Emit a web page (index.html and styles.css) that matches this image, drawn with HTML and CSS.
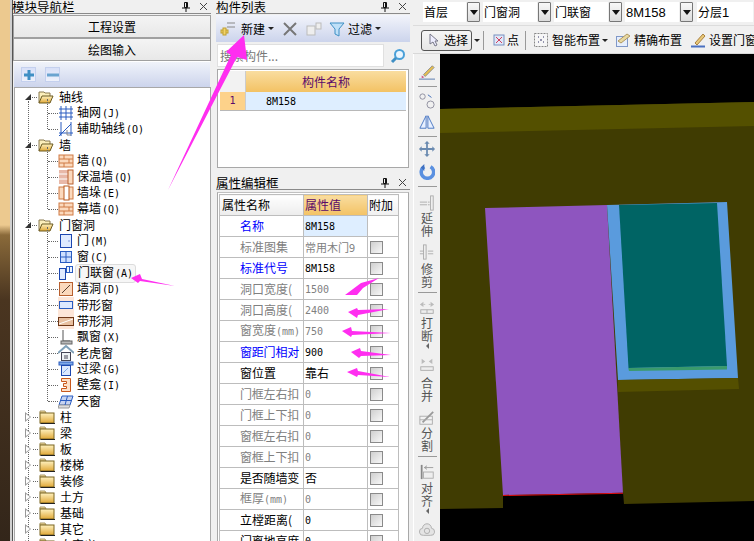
FILE: index.html
```html
<!DOCTYPE html>
<html lang="zh-CN">
<head>
<meta charset="utf-8">
<title>门窗洞</title>
<link rel="stylesheet" href="styles.css">
</head>
<body>
<svg class="defs" width="0" height="0">
  <defs>
    <linearGradient id="fold" x1="0" y1="0" x2="0" y2="1"><stop offset="0" stop-color="#fff2c0"/><stop offset="1" stop-color="#e0a838"/></linearGradient>
    <symbol id="f-open" viewBox="0 0 16 14"><path d="M1 13V2h5l1 1h5v3" fill="#fbeebb" stroke="#8a7a50"/><path d="M1 13l3-7h11l-3 7z" fill="url(#fold)" stroke="#6b5a20"/></symbol>
    <symbol id="f-shut" viewBox="0 0 16 14"><path d="M1 3V1h5l1 2z" fill="#f4dc98" stroke="#a89868"/><rect x="1" y="3" width="14" height="10" fill="url(#fold)" stroke="#7a6420"/><path d="M1.500 13.500h14.500" stroke="#222"/></symbol>
    <symbol id="brick" viewBox="0 0 16 16"><rect x="1" y="2" width="14" height="12" fill="#fbd9bd" stroke="#cf7a45"/><path d="M1 6h14M1 10h14M6 2v4M11 6v4M6 10v4" stroke="#cf7a45" fill="none"/></symbol>
    <symbol id="pin" viewBox="0 0 8 10"><path d="M2.500 0.500h3v5h-3zM0 6h8M4 6v4M4.500 1v4" stroke="#111" fill="none"/></symbol>
    <symbol id="x" viewBox="0 0 9 9"><path d="M1 1l7 7M8 1L1 8" stroke="#444" fill="none"/></symbol>
  </defs>
</svg>

<div class="app">
  <div class="wall"></div>

  <section class="nav">
    <header class="title"><span>模块导航栏</span><svg class="pin"><use href="#pin"/></svg><svg class="close"><use href="#x"/></svg></header>
    <div class="navbtn">工程设置</div>
    <div class="navbtn second">绘图输入</div>
    <div class="treebar">
      <span class="tb"><svg viewBox="0 0 12 12" width="12" height="12"><path d="M1 6h10M6 1v10" stroke="#3f8fc4" stroke-width="3"/></svg></span>
      <span class="tb"><svg viewBox="0 0 12 12" width="12" height="12"><path d="M0 6h12" stroke="#6aa4d0" stroke-width="3"/></svg></span>
    </div>
    <div class="tree">
      <div class="group">
        <div class="row top"><i class="tri open"></i><i class="dots"></i><svg class="folder"><use href="#f-open"/></svg><span>轴线</span></div>
        <div class="kids short">
          <div class="row leaf"><i class="elbow"></i><svg class="ic" viewBox="0 0 16 16"><path d="M3 1v14M8 1v14M13 1v14M1 4h14M1 8h14M1 12h14" stroke="#2a5cc0" fill="none"/></svg><span>轴网<b>(J)</b></span></div>
          <div class="row leaf"><i class="elbow"></i><svg class="ic" viewBox="0 0 16 16"><path d="M3 1v14M13 1v14M1 12h14M1 15L13 3" stroke="#2a5cc0" fill="none"/><path d="M9 9v5h4" stroke="#8a8a8a" fill="none"/></svg><span>辅助轴线<b>(O)</b></span></div>
        </div>
      </div>
      <div class="group">
        <div class="row top"><i class="tri open"></i><i class="dots"></i><svg class="folder"><use href="#f-open"/></svg><span>墙</span></div>
        <div class="kids">
          <div class="row leaf"><i class="elbow"></i><svg class="ic"><use href="#brick"/></svg><span>墙<b>(Q)</b></span></div>
          <div class="row leaf"><i class="elbow"></i><svg class="ic" viewBox="0 0 16 16"><rect x="1" y="1" width="9" height="14" fill="#e8b8a8"/><path d="M1 5h9M1 10h9" stroke="#fff"/><rect x="10" y="1" width="5" height="14" fill="#fbd9bd" stroke="#b86030"/></svg><span>保温墙<b>(Q)</b></span></div>
          <div class="row leaf"><i class="elbow"></i><svg class="ic" viewBox="0 0 16 16"><rect x="1" y="2" width="14" height="12" fill="#fbd9bd" stroke="#cf7a45"/><rect x="6" y="1" width="5" height="14" fill="#fff" stroke="#b85a20"/></svg><span>墙垛<b>(E)</b></span></div>
          <div class="row leaf"><i class="elbow"></i><svg class="ic"><use href="#brick"/></svg><span>幕墙<b>(Q)</b></span></div>
        </div>
      </div>
      <div class="group">
        <div class="row top"><i class="tri open"></i><i class="dots"></i><svg class="folder"><use href="#f-open"/></svg><span>门窗洞</span></div>
        <div class="kids">
          <div class="row leaf"><i class="elbow"></i><svg class="ic" viewBox="0 0 16 16"><rect x="2.500" y="1.500" width="11" height="13" fill="#dfeaff" stroke="#1c47b0"/><path d="M10.500 8h1" stroke="#1c47b0"/></svg><span>门<b>(M)</b></span></div>
          <div class="row leaf"><i class="elbow"></i><svg class="ic" viewBox="0 0 16 16"><rect x="2.500" y="2.500" width="11" height="11" fill="#cfe0ff" stroke="#2a5cc0"/><path d="M8 2v12M2 8h12" stroke="#2a5cc0"/></svg><span>窗<b>(C)</b></span></div>
          <div class="row leaf hot"><i class="elbow"></i><svg class="ic" viewBox="0 0 16 16"><rect x="1.500" y="3.500" width="6" height="11" fill="#dfeaff" stroke="#1c47b0"/><rect x="8.500" y="1.500" width="6" height="6" fill="#eef4ff" stroke="#2a5cc0"/><path d="M11.500 1v6" stroke="#2a5cc0"/></svg><span class="pill">门联窗<b>(A)</b></span></div>
          <div class="row leaf"><i class="elbow"></i><svg class="ic" viewBox="0 0 16 16"><rect x="1.500" y="1.500" width="13" height="13" fill="#fbd9bd" stroke="#b86030"/><path d="M4 12L12 4" stroke="#5a4030"/></svg><span>墙洞<b>(D)</b></span></div>
          <div class="row leaf"><i class="elbow"></i><svg class="ic" viewBox="0 0 16 16"><rect x="0" y="0" width="16" height="16" fill="#fde6d8"/><rect x="1.500" y="4.500" width="13" height="7" fill="#dce8ff" stroke="#2a5cc0"/></svg><span>带形窗</span></div>
          <div class="row leaf"><i class="elbow"></i><svg class="ic" viewBox="0 0 16 16"><rect x="0" y="0" width="16" height="16" fill="#fde6d8"/><rect x="0.500" y="4.500" width="15" height="8" fill="#e8c0a0" stroke="#703818"/><path d="M1 11L15 6" stroke="#fff"/></svg><span>带形洞</span></div>
          <div class="row leaf"><i class="elbow"></i><svg class="ic" viewBox="0 0 16 16"><path d="M5 1v11h7" stroke="#555" fill="#fff"/><rect x="3" y="12" width="11" height="3" fill="#b8b8b8" stroke="#666"/></svg><span>飘窗<b>(X)</b></span></div>
          <div class="row leaf"><i class="elbow"></i><svg class="ic" viewBox="0 0 16 16"><path d="M0 8l8-7 8 7" stroke="#7fa0b8" stroke-width="2" fill="none"/><rect x="3.500" y="7.500" width="9" height="8" fill="#eef2f4" stroke="#445"/><path d="M6 11h4M6 13h4" stroke="#445"/></svg><span>老虎窗</span></div>
          <div class="row leaf"><i class="elbow"></i><svg class="ic" viewBox="0 0 16 16"><rect x="1" y="1" width="14" height="3" fill="#7fa8e8" stroke="#2a5cc0"/><rect x="3.500" y="4.500" width="9" height="10" fill="#dce8ff" stroke="#1c47b0"/><path d="M5 12l5-5" stroke="#7fa8e8"/></svg><span>过梁<b>(G)</b></span></div>
          <div class="row leaf"><i class="elbow"></i><svg class="ic" viewBox="0 0 16 16"><path d="M3.500 1.500h9v13h-9v-3h5v-2h-3v-3h3v-2h-5z" fill="#fde0c8" stroke="#c8581c"/></svg><span>壁龛<b>(I)</b></span></div>
          <div class="row leaf"><i class="elbow"></i><svg class="ic" viewBox="0 0 16 16"><path d="M4 3h11l-3 9H1z" fill="#c8d4f0" stroke="#2a5cc0"/><path d="M1 12h11l-1 3H0z" fill="#ddd" stroke="#999"/><path d="M9.500 3L7 12M3 7.500h10" stroke="#2a5cc0"/></svg><span>天窗</span></div>
        </div>
      </div>
      <div class="row top"><i class="tri"></i><i class="dots"></i><svg class="folder"><use href="#f-shut"/></svg><span>柱</span></div>
      <div class="row top"><i class="tri"></i><i class="dots"></i><svg class="folder"><use href="#f-shut"/></svg><span>梁</span></div>
      <div class="row top"><i class="tri"></i><i class="dots"></i><svg class="folder"><use href="#f-shut"/></svg><span>板</span></div>
      <div class="row top"><i class="tri"></i><i class="dots"></i><svg class="folder"><use href="#f-shut"/></svg><span>楼梯</span></div>
      <div class="row top"><i class="tri"></i><i class="dots"></i><svg class="folder"><use href="#f-shut"/></svg><span>装修</span></div>
      <div class="row top"><i class="tri"></i><i class="dots"></i><svg class="folder"><use href="#f-shut"/></svg><span>土方</span></div>
      <div class="row top"><i class="tri"></i><i class="dots"></i><svg class="folder"><use href="#f-shut"/></svg><span>基础</span></div>
      <div class="row top"><i class="tri"></i><i class="dots"></i><svg class="folder"><use href="#f-shut"/></svg><span>其它</span></div>
      <div class="row top"><i class="tri"></i><i class="dots"></i><svg class="folder"><use href="#f-shut"/></svg><span>自定义</span></div>
    </div>
  </section>

  <div class="mid">
    <section class="list">
      <header class="title"><span>构件列表</span><svg class="pin"><use href="#pin"/></svg><svg class="close"><use href="#x"/></svg></header>
      <div class="listbar">
        <svg class="ic" viewBox="0 0 16 16"><path d="M7 2h8M7 6h8" stroke="#888"/><rect x="1" y="9" width="7" height="3" fill="#f2d36a" stroke="#c0a030"/><rect x="3" y="7" width="3" height="7" fill="#f2d36a" stroke="#c0a030"/></svg>
        <span class="new">新建</span><i class="caret"></i>
        <svg class="ic del" viewBox="0 0 16 16"><path d="M2 2l12 12M14 2L2 14" stroke="#777" stroke-width="2"/></svg>
        <svg class="ic copy" viewBox="0 0 16 16"><rect x="1" y="5" width="8" height="9" fill="#eee" stroke="#bbb"/><rect x="10" y="2" width="5" height="6" fill="#eee" stroke="#bbb"/></svg>
        <svg class="ic filter" viewBox="0 0 16 16"><path d="M1 2h14L10 8v7L6 13V8z" fill="#bfe0f8" stroke="#3f8fc4"/></svg>
        <span class="fil">过滤</span><i class="caret"></i>
      </div>
      <div class="searchrow">
        <div class="search">搜索构件...</div>
        <svg class="ic" viewBox="0 0 16 16"><circle cx="9.500" cy="6.500" r="4.500" fill="#eaf6ff" stroke="#4aa0d8" stroke-width="2"/><path d="M6 10l-4 4" stroke="#3f8fc4" stroke-width="3"/></svg>
      </div>
      <div class="listgrid">
        <div class="lhead"><span class="corner"></span><span class="lname">构件名称</span></div>
        <div class="lrow"><span class="num">1</span><span class="lval"><b>8M158</b></span></div>
      </div>
    </section>

    <section class="props">
      <header class="title"><span>属性编辑框</span><svg class="pin"><use href="#pin"/></svg><svg class="close"><use href="#x"/></svg></header>
      <div class="propbox">
        <table class="ptable">
          <tr class="phead"><th class="c1">属性名称</th><th class="c2">属性值</th><th class="c3">附加</th></tr>
          <tr class="blue cur"><td class="c1">名称</td><td class="c2"><b>8M158</b></td><td class="c3"></td></tr>
          <tr class="gray"><td class="c1">标准图集</td><td class="c2 clip">常用木门9</td><td class="c3"><i class="chk"></i></td></tr>
          <tr class="blue"><td class="c1">标准代号</td><td class="c2"><b>8M158</b></td><td class="c3"><i class="chk"></i></td></tr>
          <tr class="gray"><td class="c1">洞口宽度(</td><td class="c2"><b>1500</b></td><td class="c3"><i class="chk"></i></td></tr>
          <tr class="gray"><td class="c1">洞口高度(</td><td class="c2"><b>2400</b></td><td class="c3"><i class="chk"></i></td></tr>
          <tr class="gray"><td class="c1">窗宽度<b>(mm)</b></td><td class="c2"><b>750</b></td><td class="c3"><i class="chk"></i></td></tr>
          <tr class="blue"><td class="c1 tight">窗距门相对</td><td class="c2"><b>900</b></td><td class="c3"><i class="chk"></i></td></tr>
          <tr class="black"><td class="c1">窗位置</td><td class="c2">靠右</td><td class="c3"><i class="chk"></i></td></tr>
          <tr class="gray"><td class="c1 tight">门框左右扣</td><td class="c2"><b>0</b></td><td class="c3"><i class="chk"></i></td></tr>
          <tr class="gray"><td class="c1 tight">门框上下扣</td><td class="c2"><b>0</b></td><td class="c3"><i class="chk"></i></td></tr>
          <tr class="gray"><td class="c1 tight">窗框左右扣</td><td class="c2"><b>0</b></td><td class="c3"><i class="chk"></i></td></tr>
          <tr class="gray"><td class="c1 tight">窗框上下扣</td><td class="c2"><b>0</b></td><td class="c3"><i class="chk"></i></td></tr>
          <tr class="black"><td class="c1 tight">是否随墙变</td><td class="c2">否</td><td class="c3"><i class="chk"></i></td></tr>
          <tr class="gray"><td class="c1">框厚<b>(mm)</b></td><td class="c2"><b>0</b></td><td class="c3"><i class="chk"></i></td></tr>
          <tr class="black"><td class="c1">立樘距离(</td><td class="c2"><b>0</b></td><td class="c3"><i class="chk"></i></td></tr>
          <tr class="black"><td class="c1 tight">门离地高度</td><td class="c2"><b>0</b></td><td class="c3"><i class="chk"></i></td></tr>
        </table>
      </div>
    </section>
  </div>

  <div class="main">
    <div class="combos">
      <div class="combo w42"><span>首层</span></div><i class="drop"></i>
      <div class="combo w54"><span>门窗洞</span></div><i class="drop"></i>
      <div class="combo w54"><span>门联窗</span></div><i class="drop"></i>
      <div class="combo w54"><span class="latin">8M158</span></div><i class="drop"></i>
      <div class="combo w55"><span>分层<span class="latin">1</span></span></div>
    </div>
    <div class="tools">
      <div class="select"><svg viewBox="0 0 12 14" width="12" height="14"><path d="M2 1v10l3-2 2 4 2-1-2-4h3z" fill="#eef" stroke="#778"/></svg><span>选择</span></div>
      <i class="caret"></i><i class="vsep"></i>
      <svg class="ic" viewBox="0 0 16 16"><rect x="3" y="3" width="10" height="10" fill="#dfe8f8" stroke="#7890c0"/><path d="M5 5l6 6M11 5l-6 6" stroke="#d04060"/></svg>
      <span class="tl pt">点</span><i class="vsep"></i>
      <svg class="ic" viewBox="0 0 16 16"><rect x="1.500" y="1.500" width="13" height="13" fill="#f6f6f6" stroke="#888" stroke-dasharray="2 1"/><path d="M5 5h1M10 5h1M5 10h1M10 10h1M8 7v2" stroke="#336"/></svg>
      <span class="tl">智能布置</span><i class="caret"></i>
      <svg class="ic sp1" viewBox="0 0 16 16"><rect x="1.500" y="4.500" width="11" height="10" fill="#e6eefc" stroke="#8098c8"/><path d="M3 9l9-7 3 2-9 7z" fill="#e8d8a0" stroke="#b09860"/></svg>
      <span class="tl">精确布置</span>
      <svg class="ic sp2" viewBox="0 0 16 16"><path d="M5 11l8-9 2 2-8 9z" fill="#e8c878" stroke="#a88040"/><path d="M1 14.500h14" stroke="#4a70c0" stroke-width="2"/></svg>
      <span class="tl">设置门窗</span>
    </div>
    <div class="work">
      <div class="vbar">
        <svg class="ic" viewBox="0 0 18 18"><path d="M5 12L15 2l2 2L7 14z" fill="#e8c050" stroke="#888"/><path d="M3 13l3 2-3 1z" fill="#d05080"/><path d="M0 17h18" stroke="#4a70a8"/></svg>
        <i class="hsep m6"></i>
        <svg class="ic m6" viewBox="0 0 18 18"><circle cx="4" cy="4" r="3" fill="none" stroke="#889"/><circle cx="13" cy="13" r="4" fill="none" stroke="#889"/><path d="M10 2l4 3" stroke="#3060b0"/></svg>
        <svg class="ic m5" viewBox="0 0 18 18"><path d="M8 2L1 16h7zM10 2l7 14h-7z" fill="#e8f0ff" stroke="#3f70c0"/></svg>
        <i class="hsep m6"></i>
        <svg class="ic m4" viewBox="0 0 18 18"><path d="M9 1v16M1 9h16" stroke="#6a8ab0" stroke-width="2"/><path d="M9 0l3 3H6zM9 18l3-3H6zM0 9l3-3v6zM18 9l-3-3v6z" fill="#6a8ab0"/></svg>
        <svg class="ic m7" viewBox="0 0 18 18"><path d="M6 3a7 7 0 1 0 7 0" fill="none" stroke="#5a90e0" stroke-width="4"/><path d="M6 0v8L2 4z" fill="#3f70c0"/></svg>
        <i class="hsep m6"></i>
        <svg class="ic m8" viewBox="0 0 18 18"><rect x="13" y="1" width="3" height="16" fill="#eee" stroke="#aaa"/><path d="M1 8h8M1 11h8M10 8h2M10 11h2" stroke="#aaa"/></svg>
        <span class="vt">延<br>伸</span>
        <svg class="ic m7" viewBox="0 0 18 18"><rect x="5" y="1" width="3" height="16" fill="#eee" stroke="#aaa"/><path d="M1 8h4M1 11h4M10 8h6M10 11h6" stroke="#aaa"/></svg>
        <span class="vt m2">修<br>剪</span>
        <i class="hsep m4"></i>
        <svg class="ic m7" viewBox="0 0 18 18"><path d="M1 5l4-3v6zM17 5l-4-3v6z" fill="#bbb"/><path d="M5 5h2M11 5h2" stroke="#bbb"/><rect x="2" y="11" width="14" height="4" fill="#eee" stroke="#aaa"/><path d="M9 11v4" stroke="#aaa"/></svg>
        <span class="vt">打<br>断</span><i class="mini m1"></i>
        <svg class="ic m8" viewBox="0 0 18 18"><path d="M7 5L3 2v6zM11 5l4-3v6z" fill="#bbb"/><rect x="2" y="11" width="14" height="4" fill="#eee" stroke="#aaa"/></svg>
        <span class="vt m3">合<br>并</span>
        <svg class="ic m8" viewBox="0 0 18 18"><rect x="1" y="7" width="14" height="9" fill="#f2f2f2" stroke="#aaa"/><path d="M4 14L16 2" stroke="#999" stroke-width="2"/><path d="M1 11h14" stroke="#aaa"/></svg>
        <span class="vt">分<br>割</span>
        <i class="hsep m4"></i>
        <svg class="ic m7" viewBox="0 0 18 18"><path d="M3 1v16" stroke="#888" stroke-width="2"/><rect x="5" y="9" width="11" height="7" fill="#eee" stroke="#aaa"/><path d="M6 4h10M6 4l3-2M6 4l3 2" stroke="#999"/></svg>
        <span class="vt m1">对<br>齐</span><i class="mini m1"></i>
        <svg class="ic m8" viewBox="0 0 18 18"><path d="M5 15a4 4 0 0 1-1-8 5 5 0 0 1 10 0 4 4 0 0 1-1 8z" fill="#e4e4e4" stroke="#aaa"/><circle cx="9" cy="10" r="3" fill="none" stroke="#aaa"/></svg>
      </div>
      <svg class="scene" viewBox="0 0 314 487" preserveAspectRatio="none">
        <rect width="314" height="487" fill="#000"/>
        <polygon points="0,55 314,48 314,447 184,450 183,438 63,441 63,454 0,455" fill="#403c02"/>
        <polygon points="0,55 314,48 314,72 0,79" fill="#545000"/>
        <polygon points="45,154 167,151 183,438.700 63,441" fill="#8e55bf"/>
        <polygon points="63,441 183,438.700 183,439.700 63,442" fill="#e01010"/>
        <polygon points="167,151 287,148 298,324 178,326" fill="#5a9bdd"/>
        <polygon points="179,151 277,149 287,312 188.500,314" fill="#006464"/>
        <polygon points="188.300,314 287,312 287,315.500 189,317" fill="#3a9a6c"/>
        <polygon points="178,326 298,324 299,335 178,338" fill="#544f00"/>
      </svg>
    </div>
  </div>
</div>

<svg class="arrows" viewBox="0 0 754 541">
  <g fill="#ff2ef0">
    <polygon points="168,190 231,55 226,52 244,35 247,60 237,57"/>
    <polygon points="131,278 140,274 142,279 175,286 140,281 138,283"/>
    <polygon points="345,295 361,283 379,278 363,288 357,295"/>
    <polygon points="348,312 357,308 358,310 389,309 358,315 357,318"/>
    <polygon points="342,331 351,327 352,331 391,333 352,335 351,337"/>
    <polygon points="351,352 360,348 361,351 391,355 361,356 359,358"/>
    <polygon points="347,372 357,368 358,371 390,377 358,375 357,377"/>
  </g>
</svg>
</body>
</html>
```

FILE: styles.css
```css
* { box-sizing: border-box; }
html, body { margin: 0; padding: 0; }
body {
  width: 754px;
  height: 541px;
  overflow: hidden;
  position: relative;
  background: #f0f0f0;
  color: #000;
  font: 12px/16px "Noto Sans CJK SC", "Liberation Sans", sans-serif;
}
i { display: block; font-style: normal; }
.defs { position: absolute; }
.app { display: flex; width: 754px; height: 541px; }

.wall {
  width: 13px;
  flex: none;
  border-right: 1px solid #555;
  background:
    linear-gradient(90deg, transparent 0 10px, #d0d0d0 10px 12px),
    linear-gradient(180deg, #ecc98f 0 225px, #8a6a3a 235px, #4a3520 300px, #33261a 541px);
}

.title {
  height: 14px;
  display: flex;
  align-items: center;
  font-size: 12.500px;
  line-height: 13px;
  border-bottom: 1px solid #8a8a8a;
}
.title span:first-child { flex: 1; }
.pin { width: 8px; height: 10px; margin-right: 9px; flex: none; }
.close { width: 9px; height: 9px; margin-right: 3px; flex: none; }

.nav { width: 199px; flex: none; padding-right: 1px; }
.nav .title span { margin-left: -1px; }
.navbtn {
  height: 23px;
  margin-top: 1px;
  border: 1px solid #a0a0a0;
  background: linear-gradient(#f4f4f4, #e8e8e8);
  text-align: center;
  line-height: 21px;
}
.navbtn.second { margin-top: 0; }
.treebar {
  height: 26px;
  margin: 0 1px;
  display: flex;
  align-items: center;
  gap: 9px;
  padding-left: 7px;
  background: linear-gradient(#f0f3fa, #ccd4ec);
  border-top: 1px solid #fff;
}
.tb {
  width: 15px;
  height: 15px;
  display: flex;
  align-items: center;
  justify-content: center;
  background: linear-gradient(#d8e0f8, #eef1fb);
  border: 1px solid #c4d0ee;
}
.tree {
  height: 455px;
  margin-left: 1px;
  overflow: hidden;
  background: #fff;
  border: 1px solid #a8a8a8;
  padding-top: 1px;
}
.row {
  height: 16px;
  display: flex;
  align-items: center;
  white-space: nowrap;
}
.row b { font: 10px/16px "DejaVu Sans Mono", monospace; margin-left: 1px; }
.group { position: relative; }
.group::before {
  content: "";
  position: absolute;
  left: 13px;
  top: 12px;
  bottom: -8px;
  border-left: 1px dotted #666;
}
.group:nth-child(3)::before { bottom: auto; height: 312px; }
.tri { flex: none; }
.tri.open {
  width: 0; height: 0;
  margin-left: 10px;
  border-left: 6px solid transparent;
  border-bottom: 6px solid #333;
}
.tri:not(.open) {
  position: relative;
  width: 0; height: 0;
  margin-left: 10px;
  border-top: 5px solid transparent;
  border-bottom: 5px solid transparent;
  border-left: 6px solid #999;
}
.tri:not(.open)::after {
  content: "";
  position: absolute;
  left: -5px;
  top: -3px;
  border-top: 3px solid transparent;
  border-bottom: 3px solid transparent;
  border-left: 4px solid #fff;
}
.dots { width: 5px; margin-left: 2px; border-top: 1px dotted #666; flex: none; }
.tri.open + .dots { margin-left: 1px; }
.folder { width: 16px; height: 14px; flex: none; margin: 0 5px 0 1px; }
.kids { position: relative; }
.kids::before {
  content: "";
  position: absolute;
  left: 32px;
  top: -6px;
  bottom: 8px;
  border-left: 1px dotted #666;
}
.leaf { padding-left: 33px; }
.elbow { width: 10px; border-top: 1px dotted #666; flex: none; }
.ic { width: 16px; height: 16px; flex: none; }
.leaf .ic { margin-right: 3px; }
.pill {
  border: 1px solid #dcdcdc;
  border-radius: 3px;
  background: #f6f6f6;
  padding: 0 2px;
  margin-left: -2px;
  line-height: 14px;
}

.mid { width: 194px; flex: none; margin-left: 4px; }
.list { height: 175px; }
.listbar {
  height: 27px;
  margin-top: 1px;
  display: flex;
  align-items: center;
  padding-left: 4px;
  background: linear-gradient(#f2f4fb, #ccd4ec);
}
.new { margin-left: 5px; }
.fil { margin-left: 3px; }
.caret {
  width: 0; height: 0; flex: none;
  margin-left: 3px;
  border: 3px solid transparent;
  border-top: 3px solid #222;
  border-bottom: 0;
}
.del { margin-left: 8px; }
.copy { margin-left: 8px; }
.filter { margin-left: 7px; }
.searchrow { display: flex; align-items: center; height: 27px; padding-left: 1px; gap: 6px; }
.search {
  width: 167px;
  height: 23px;
  padding-left: 2px;
  background: #fff;
  border: 1px solid #e0e0e0;
  line-height: 21px;
  color: #777;
}
.listgrid {
  height: 99px;
  margin: 0 1px;
  background: #fff;
  border: 1px solid #a8a8a8;
  padding: 1px 2px;
}
.lhead, .lrow { display: flex; }
.lhead { height: 21px; }
.lrow { height: 19px; border-bottom: 1px solid #b8b8b8; }
.corner { width: 26px; background: #f2f2f2; border-right: 1px solid #ccc; }
.lname {
  flex: 1;
  text-align: center;
  line-height: 21px;
  color: #5a0a6a;
  background: linear-gradient(#f9dda0, #f3c264);
}
.num {
  width: 26px;
  text-align: center;
  background: #fdd28a;
  color: #5a0a6a;
  font: 10px/18px "DejaVu Sans Mono", monospace;
  border-right: 1px solid #ccc;
}
.lval { flex: 1; background: #deeeff; padding-left: 20px; }
.lval b { font: 10px/18px "DejaVu Sans Mono", monospace; }

.props .title { margin-top: 1px; }
.propbox {
  height: 352px;
  margin: 2px 1px 0;
  padding: 1px 0 0 1px;
  background: #fff;
  border-left: 1px solid #a8a8a8;
  border-right: 1px solid #a8a8a8;
  border-top: 1px solid #c0c0c0;
  overflow: hidden;
}
.ptable {
  border-collapse: collapse;
  table-layout: fixed;
  width: 179px;
}
.ptable tr { height: 21px; }
.ptable th, .ptable td {
  padding: 0;
  border: 1px solid #bdbdbd;
  font-weight: 400;
  white-space: nowrap;
  overflow: hidden;
  text-align: left;
}
.ptable td b { font: 10px/16px "DejaVu Sans Mono", monospace; }
.c1 { width: 84px; padding-left: 20px !important; }
.phead .c1 { padding-left: 2px !important; background: linear-gradient(#fff, #ececec); }
.c2 { width: 64px; padding-left: 1px !important; }
.c3 { width: 31px; padding-left: 2px !important; }
.phead .c2 { color: #5a0a6a; background: linear-gradient(#f9dda0, #f3c264); }
.phead .c3 { padding-left: 1px !important; background: linear-gradient(#fff, #f0f0f0); }
.tight { letter-spacing: -0.2px; }
.blue .c1 { color: #0000ff; }
.gray .c1, .gray .c2 { color: #808080; }
.cur .c2 { background: #deeeff; }
.clip { font-size: 11px; }
.chk {
  width: 13px;
  height: 13px;
  border: 1px solid #8a8a8a;
  background: linear-gradient(135deg, #cfcfcf, #f8f8f8);
}

.main { flex: 1; min-width: 0; display: flex; flex-direction: column; padding-left: 3px; }
.combos {
  height: 26px;
  display: flex;
  align-items: center;
  padding: 0 0 2px 10px;
  border-bottom: 1px solid #dcdcdc;
  white-space: nowrap;
}
.combo { height: 20px; background: #fff; padding-left: 1px; line-height: 20px; }
.w42 { width: 43px; }
.w54 { width: 54px; margin-left: 3px; }
.w55 { width: 56px; margin-left: 4px; }
.latin { font-family: "Liberation Sans", sans-serif; font-size: 13px; }
.drop {
  width: 13px;
  height: 20px;
  margin-left: 1px;
  flex: none;
  border: 1px solid #777;
  border-radius: 1px;
  background: linear-gradient(#f8f8f8, #dcdcdc);
  position: relative;
}
.drop::after {
  content: "";
  position: absolute;
  left: 2px;
  top: 7px;
  border: 4px solid transparent;
  border-top: 5px solid #111;
  border-bottom: 0;
}
.tools {
  height: 28px;
  display: flex;
  align-items: center;
  padding: 1px 0 0 8px;
  white-space: nowrap;
  overflow: hidden;
  border-bottom: 1px solid #d8d8d8;
}
.select {
  width: 51px;
  height: 21px;
  flex: none;
  display: flex;
  align-items: center;
  gap: 4px;
  padding-left: 6px;
  border: 1px solid #555;
  border-radius: 3px;
  background: linear-gradient(#f6f6f6, #e6e6e6);
}
.tools .caret { margin-left: 2px; }
.vsep { width: 1px; height: 19px; background: #999; margin: 0 7px 0 3px; flex: none; }
.tl { margin-left: 3px; }
.pt { margin-left: 0; margin-right: 3px; }
.sp1 { margin-left: 7px; }
.sp2 { margin-left: 8px; }
.work { flex: 1; display: flex; min-height: 0; }
.vbar {
  width: 27px;
  flex: none;
  display: flex;
  flex-direction: column;
  align-items: center;
  overflow: hidden;
  padding-top: 10px;
  border-left: 1px solid #fff;
}
.m1 { margin-top: 1px; }
.m2 { margin-top: 2px; }
.m3 { margin-top: 3px; }
.m4 { margin-top: 4px; }
.m5 { margin-top: 5px; }
.m6 { margin-top: 6px; }
.m7 { margin-top: 7px; }
.m8 { margin-top: 8px; }
.hsep { width: 19px; height: 1px; background: #999; flex: none; }
.vt { color: #555; line-height: 13px; display: block; text-align: center; flex: none; }
.mini {
  width: 0; height: 0; flex: none;
  border: 3px solid transparent;
  border-right: 3px solid #666;
  border-left: 0;
}
.scene { width: 314px; height: 487px; flex: none; display: block; }
.arrows {
  position: absolute;
  left: 0;
  top: 0;
  width: 754px;
  height: 541px;
  pointer-events: none;
}
```
